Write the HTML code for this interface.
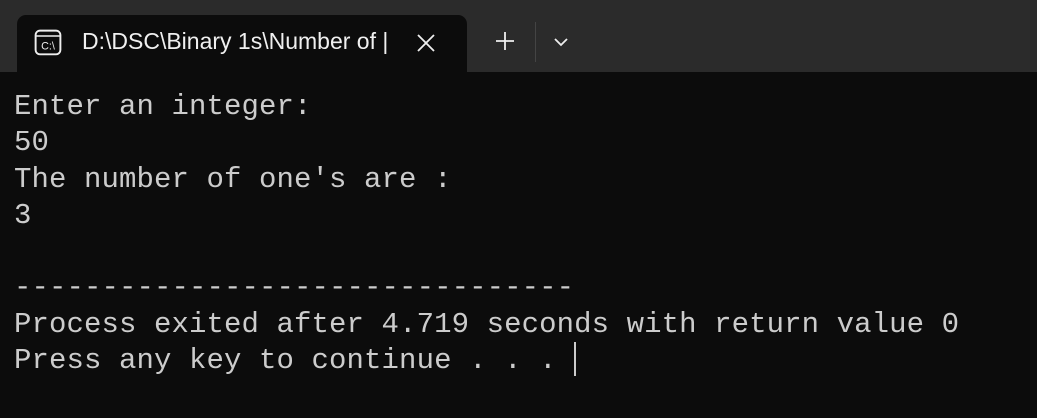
<!DOCTYPE html>
<html><head><meta charset="utf-8"><style>
html,body{margin:0;padding:0;width:1037px;height:418px;overflow:hidden;background:#0c0c0c;}
.bar{position:absolute;left:0;top:0;width:1037px;height:72px;background:#2b2b2b;}
.tab{position:absolute;left:17px;top:15px;width:450px;height:57px;background:#0c0c0c;border-radius:9px 9px 0 0;}
.title{position:absolute;left:82px;top:28px;font:23px "Liberation Sans",sans-serif;color:#f0f0f0;white-space:nowrap;}
.term{position:absolute;left:14px;top:89px;font:29px/36.3px "Liberation Mono",monospace;letter-spacing:0.1px;color:#cccccc;white-space:pre;}
.sep{position:absolute;left:535px;top:22px;width:1px;height:40px;background:#444;}
.cursor{position:absolute;left:574px;top:342px;width:2px;height:34px;background:#ccc;}
</style></head><body>
<div class="bar"></div>
<div class="tab"></div>
<svg style="position:absolute;left:34px;top:29px" width="28" height="28" viewBox="0 0 26 26">
<rect x="1.5" y="1.5" width="23" height="22" rx="4" fill="none" stroke="#eee" stroke-width="1.8"/>
<line x1="2" y1="6.5" x2="24" y2="6.5" stroke="#eee" stroke-width="1.5"/>
<text x="13" y="19" font-family="Liberation Sans,sans-serif" font-size="10" fill="#eee" text-anchor="middle">C:\</text>
</svg>
<div class="title">D:\DSC\Binary 1s\Number of |</div>
<svg style="position:absolute;left:415px;top:32px" width="22" height="22" viewBox="0 0 22 22"><path d="M3 3L19 19M19 3L3 19" stroke="#eee" stroke-width="1.8"/></svg>
<svg style="position:absolute;left:494px;top:30px" width="22" height="22" viewBox="0 0 22 22"><path d="M11 2V20M2 11H20" stroke="#eee" stroke-width="1.8"/></svg>
<div class="sep"></div>
<svg style="position:absolute;left:553px;top:36px" width="16" height="12" viewBox="0 0 16 12"><path d="M2 3L8 9L14 3" fill="none" stroke="#eee" stroke-width="1.8"/></svg>
<div class="term">Enter an integer:
50
The number of one's are :
3

--------------------------------
Process exited after 4.719 seconds with return value 0
Press any key to continue . . . </div>
<div class="cursor"></div>
</body></html>
